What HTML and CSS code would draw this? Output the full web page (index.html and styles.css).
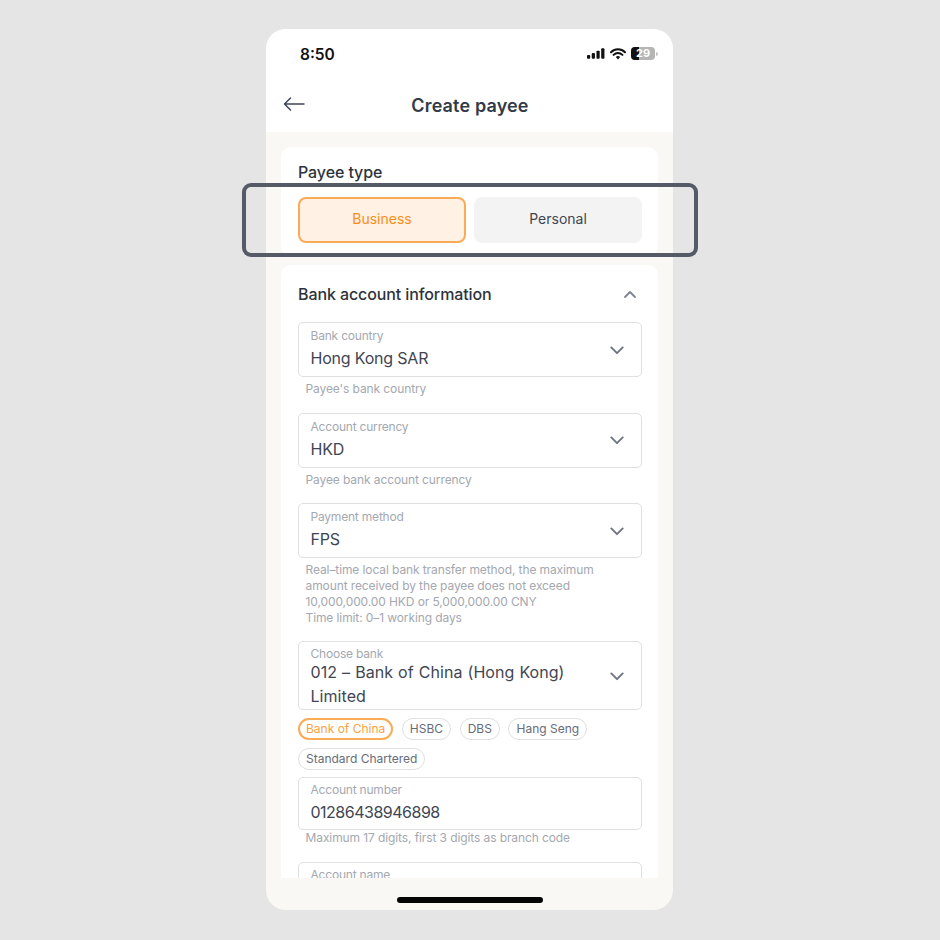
FILE: index.html
```html
<!DOCTYPE html>
<html lang="en">
<head>
<meta charset="utf-8">
<title>Create payee</title>
<link rel="stylesheet" href="styles.css">
</head>
<body>
<div class="phone">
  <div class="status">
    <span class="time">8:50</span>
    <div class="status-icons">
      <svg width="18" height="11" viewBox="0 0 19 11"><rect x="0" y="7" width="3.4" height="4" rx="1" fill="#111"/><rect x="5" y="5" width="3.4" height="6" rx="1" fill="#111"/><rect x="10" y="2.500" width="3.4" height="8.500" rx="1" fill="#111"/><rect x="15" y="0" width="3.4" height="11" rx="1" fill="#111"/></svg>
      <svg width="16" height="12" viewBox="0 0 16 12"><path d="M1 4.200a10 10 0 0 1 14 0M3.600 6.900a6.300 6.300 0 0 1 8.800 0" fill="none" stroke="#111" stroke-width="2" stroke-linecap="round"/><path d="M5.800 9a3.200 3.200 0 0 1 4.400 0L8 11.600z" fill="#111"/></svg>
      <div class="battery"><span class="battery-fill"></span><span class="battery-num">29</span></div>
      <span class="battery-tip"></span>
    </div>
  </div>
  <div class="nav">
    <svg class="back" width="22" height="14" viewBox="0 0 22 14"><path d="M21 7H1.500M7.500 1 1.500 7l6 6" fill="none" stroke="#3f4652" stroke-width="1.500" stroke-linecap="round" stroke-linejoin="round"/></svg>
    <span class="nav-title">Create payee</span>
  </div>
  <div class="content">
    <section class="card type-card">
      <h2 class="type-title">Payee type</h2>
      <div class="type-row">
        <div class="type-btn selected">Business</div>
        <div class="type-btn">Personal</div>
      </div>
    </section>
    <section class="card info-card">
      <div class="info-head">
        <h2 class="info-title">Bank account information</h2>
        <svg width="14" height="9" viewBox="0 0 14 9"><path d="M2 7l5-5 5 5" fill="none" stroke="#7d8491" stroke-width="1.800" stroke-linecap="round" stroke-linejoin="round"/></svg>
      </div>
      <div class="field">
        <div class="field-text"><div class="field-label">Bank country</div><div class="field-value">Hong Kong SAR</div></div>
        <svg class="chev" width="14" height="9" viewBox="0 0 16 10"><path d="M1.500 1.500 8 8l6.500-6.500" fill="none" stroke="#6d7482" stroke-width="2.200" stroke-linecap="round" stroke-linejoin="round"/></svg>
      </div>
      <p class="help">Payee's bank country</p>
      <div class="field">
        <div class="field-text"><div class="field-label">Account currency</div><div class="field-value">HKD</div></div>
        <svg class="chev" width="14" height="9" viewBox="0 0 16 10"><path d="M1.500 1.500 8 8l6.500-6.500" fill="none" stroke="#6d7482" stroke-width="2.200" stroke-linecap="round" stroke-linejoin="round"/></svg>
      </div>
      <p class="help">Payee bank account currency</p>
      <div class="field">
        <div class="field-text"><div class="field-label">Payment method</div><div class="field-value">FPS</div></div>
        <svg class="chev" width="14" height="9" viewBox="0 0 16 10"><path d="M1.500 1.500 8 8l6.500-6.500" fill="none" stroke="#6d7482" stroke-width="2.200" stroke-linecap="round" stroke-linejoin="round"/></svg>
      </div>
      <p class="help help-long">Real–time local bank transfer method, the maximum<br>amount received by the payee does not exceed<br>10,000,000.00 HKD or 5,000,000.00 CNY<br>Time limit: 0–1 working days</p>
      <div class="field field-tall">
        <div class="field-text"><div class="field-label">Choose bank</div><div class="field-value">012 – Bank of China (Hong Kong)<br>Limited</div></div>
        <svg class="chev" width="14" height="9" viewBox="0 0 16 10"><path d="M1.500 1.500 8 8l6.500-6.500" fill="none" stroke="#6d7482" stroke-width="2.200" stroke-linecap="round" stroke-linejoin="round"/></svg>
      </div>
      <div class="chips">
        <span class="chip chip-on">Bank of China</span>
        <span class="chip">HSBC</span>
        <span class="chip">DBS</span>
        <span class="chip">Hang Seng</span>
        <span class="chip">Standard Chartered</span>
      </div>
      <div class="field field-input">
        <div class="field-text"><div class="field-label">Account number</div><div class="field-value num">01286438946898</div></div>
      </div>
      <p class="help help-tight">Maximum 17 digits, first 3 digits as branch code</p>
      <div class="field field-input">
        <div class="field-text"><div class="field-label">Account name</div></div>
      </div>
    </section>
  </div>
  <div class="home"><span class="home-bar"></span></div>
  <div class="highlight"></div>
</div>
</body>
</html>
```
FILE: styles.css
```css
* { box-sizing: border-box; }
html, body { margin: 0; height: 100%; }
body {
  background: #e5e5e5;
  font-family: Inter, "Noto Sans", sans-serif;
  color: #3f4652;
  padding: 29px 0 0 266px;
}
.phone {
  position: relative;
  width: 407px;
  height: 881px;
  border-radius: 20px;
  background: #faf8f5;
  display: flex;
  flex-direction: column;
}
.status {
  background: #fff;
  border-radius: 20px 20px 0 0;
  height: 50px;
  padding: 0 15px 0 34px;
  display: flex;
  align-items: center;
  justify-content: space-between;
}
.time {
  font-size: 15.500px;
  font-weight: 600;
  color: #111;
}
.status-icons { display: flex; align-items: center; gap: 5px; margin-top: -1px; }
.battery {
  position: relative;
  width: 24px;
  height: 13px;
  border-radius: 4px;
  background: #b5b5b5;
  overflow: hidden;
  display: flex;
  align-items: center;
  justify-content: center;
}
.battery-fill { position: absolute; left: 0; top: 0; bottom: 0; width: 8px; background: #111; }
.battery-num {
  position: relative;
  font-size: 11px;
  font-weight: 700;
  line-height: 13px;
  color: #fff;
}
.battery-tip { width: 2px; height: 4px; margin-left: -4px; border-radius: 0 2px 2px 0; background: #c4c4c4; }
.nav {
  background: #fff;
  height: 53px;
  position: relative;
  display: flex;
  align-items: center;
  justify-content: center;
}
.back { position: absolute; left: 17px; top: 18px; }
.nav-title {
  font-size: 18px;
  font-weight: 600;
  letter-spacing: 0.15px;
  color: #333a47;
  margin-left: 1px;
}
.content {
  flex: 1;
  overflow: hidden;
  padding: 15px 15px 0;
}
.card { background: #fff; border-radius: 10px; }
.type-card { height: 109px; padding: 15px 16px 0 17px; margin-bottom: 9px; }
.type-title, .info-title {
  margin: 0;
  font-size: 16px;
  font-weight: 500;
  line-height: 20px;
  letter-spacing: -0.1px;
  color: #2e333b;
}
.type-row { display: grid; grid-template-columns: 1fr 1fr; gap: 8px; margin-top: 15px; }
.type-btn {
  height: 46px;
  border-radius: 8px;
  background: #f3f3f4;
  font-size: 14px;
  display: flex;
  align-items: center;
  justify-content: center;
  padding-bottom: 3px;
}
.selected { background: #fff2e5; border: 2px solid #fbab55; color: #f98d1a; }
.info-card { padding: 0 16px 40px 17px; }
.info-head {
  height: 57px;
  padding: 1px 5px 0 0;
  display: flex;
  align-items: center;
  justify-content: space-between;
}
.field {
  display: flex;
  align-items: center;
  justify-content: space-between;
  height: 55px;
  border: 1px solid #dfe0e2;
  border-radius: 5px;
  padding: 0 17px 0 12px;
}
.chev { margin-top: 1px; }
.field-tall { height: 69px; }
.field-input { height: 53px; }
.field-text { display: flex; flex-direction: column; align-self: flex-start; margin-left: -0.5px; }
.field-label {
  font-size: 12px;
  letter-spacing: -0.2px;
  line-height: 16px;
  color: #a4a8b0;
  margin-top: 5px;
}
.field-value {
  font-size: 16px;
  letter-spacing: -0.2px;
  line-height: 24px;
  color: #3f4652;
  margin-top: 2px;
}
.field-tall .field-label, .field-input .field-label { margin-top: 4px; }
.field-tall .field-value { margin-top: -2px; letter-spacing: 0.05px; word-spacing: 0.5px; }
.num { letter-spacing: -0.5px; }
.help {
  margin: 4px 0 15.500px;
  padding-left: 7.500px;
  font-size: 12px;
  letter-spacing: -0.1px;
  line-height: 16px;
  color: #a4a8b0;
}
.help-long { margin-bottom: 15px; }
.help-tight { margin: 0 0 16px; }
.chips { display: flex; flex-wrap: wrap; gap: 8px 8.600px; margin: 8px 0 7px; }
.chip {
  height: 22px;
  padding: 0 7px;
  border: 1px solid #dfe0e2;
  border-radius: 11px;
  font-size: 12px;
  line-height: 20px;
  color: #666c78;
}
.chip-on { border: 2px solid #fbab55; color: #f9a23f; padding: 0 6px; line-height: 18px; }
.home {
  height: 32px;
  display: flex;
  justify-content: center;
  padding-top: 19px;
}
.home-bar { width: 146px; height: 6px; border-radius: 3px; background: #050505; }
.highlight {
  position: absolute;
  left: -24px;
  top: 154px;
  width: 456px;
  height: 74px;
  border: 4px solid #555b66;
  border-radius: 9px;
}
```
